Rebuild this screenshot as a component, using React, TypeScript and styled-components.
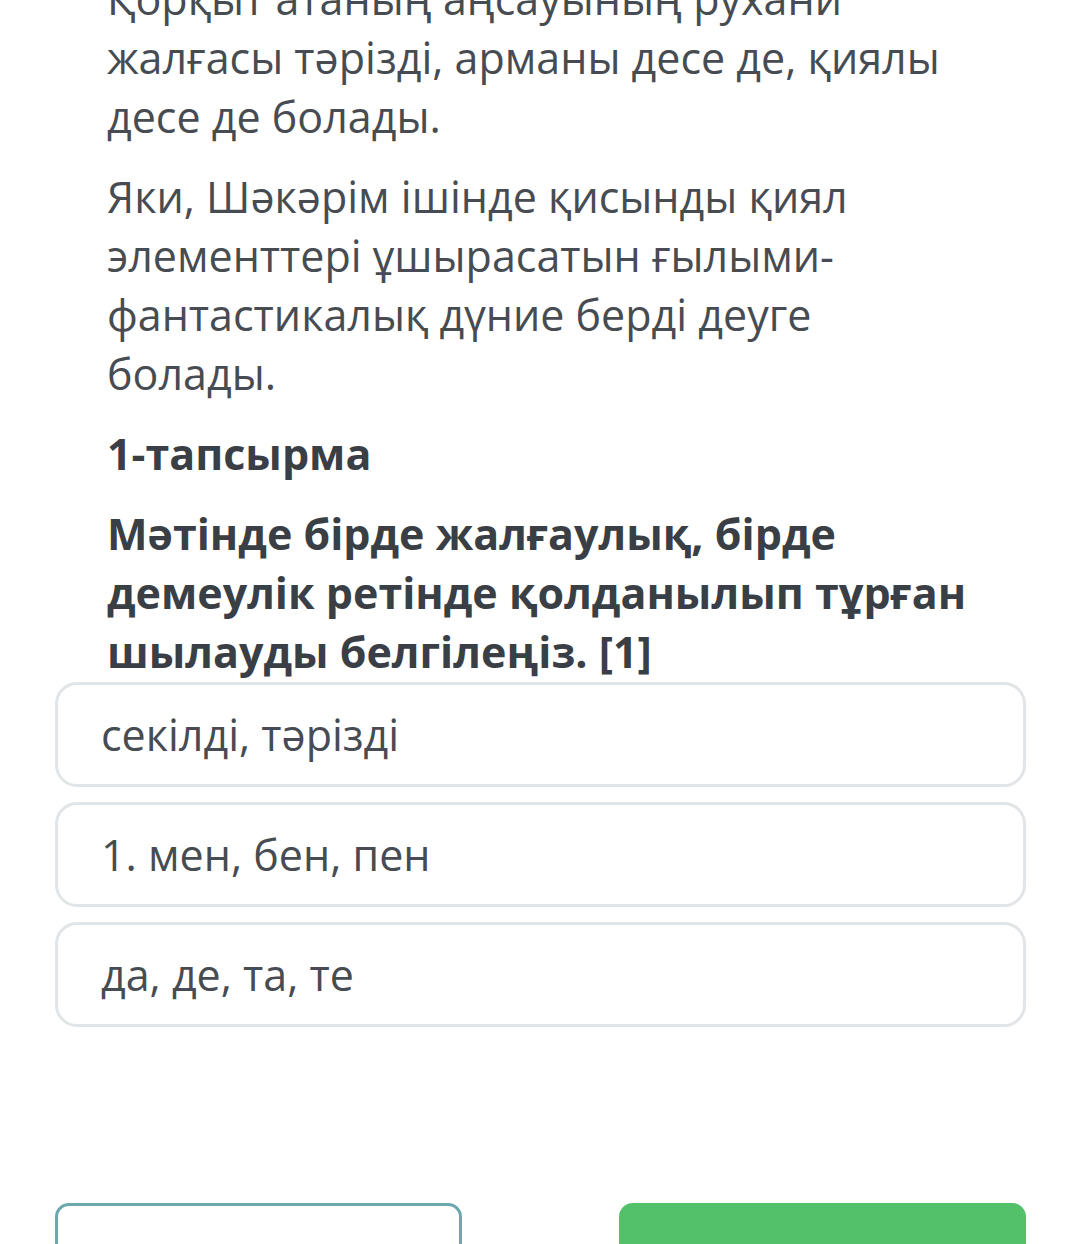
import styled, { createGlobalStyle } from "styled-components";

const GlobalStyle = createGlobalStyle`
  html, body {
    margin: 0;
    padding: 0;
    background: #ffffff;
    overflow: hidden;
  }
  body {
    font-family: "Open Sans", "Noto Sans", sans-serif;
  }
`;

const options = ["секілді, тәрізді", "1. мен, бен, пен", "да, де, та, те"];

export default function App() {
  return (
    <>
      <GlobalStyle />
      <Page>
        <Reading>
          <Paragraph>
            Қорқыт атаның аңсауының рухани жалғасы тәрізді, арманы десе де,
            қиялы десе де болады.
          </Paragraph>
          <Paragraph>
            Яки, Шәкәрім ішінде қисынды қиял элементтері ұшырасатын ғылыми-
            фантастикалық дүние берді деуге болады.
          </Paragraph>
          <Heading>1-тапсырма</Heading>
          <Heading>
            Мәтінде бірде жалғаулық, бірде демеулік ретінде қолданылып тұрған
            шылауды белгілеңіз. [1]
          </Heading>
        </Reading>
        <OptionList>
          {options.map((o) => (
            <Option key={o}>{o}</Option>
          ))}
        </OptionList>
        <Actions>
          <Button $variant="outline" />
          <Button $variant="primary" />
        </Actions>
      </Page>
    </>
  );
}

const Page = styled.main`
  width: 1080px;
  height: 1244px;
  box-sizing: border-box;
  padding: 0 54px 0 55px;
  overflow: hidden;
`;

const Reading = styled.div`
  margin-top: -31px;
  padding: 0 48px 0 52px;
  display: flex;
  flex-direction: column;
  gap: 21px;
`;

const Paragraph = styled.p`
  margin: 0;
  font-size: 43px;
  line-height: 59px;
  color: #474c52;
  font-weight: 400;
`;

const Heading = styled.p`
  margin: 0;
  font-size: 43px;
  line-height: 59px;
  color: #3a3f46;
  font-weight: 700;
`;

const OptionList = styled.div`
  margin-top: 1px;
  display: flex;
  flex-direction: column;
  gap: 15px;
`;

const Option = styled.div`
  height: 105px;
  box-sizing: border-box;
  border: 3px solid #e2e5e7;
  border-radius: 22px;
  padding: 0 43px;
  display: flex;
  align-items: center;
  font-size: 43px;
  color: #474c52;
`;

const Actions = styled.div`
  margin-top: 176px;
  display: flex;
  justify-content: space-between;
`;

const Button = styled.div<{ $variant: "outline" | "primary" }>`
  width: 407px;
  height: 100px;
  box-sizing: border-box;
  border-radius: 14px;
  border: 3px solid ${(p) => (p.$variant === "outline" ? "#6aa8ae" : "#52c16a")};
  background: ${(p) => (p.$variant === "outline" ? "#ffffff" : "#52c16a")};
`;
